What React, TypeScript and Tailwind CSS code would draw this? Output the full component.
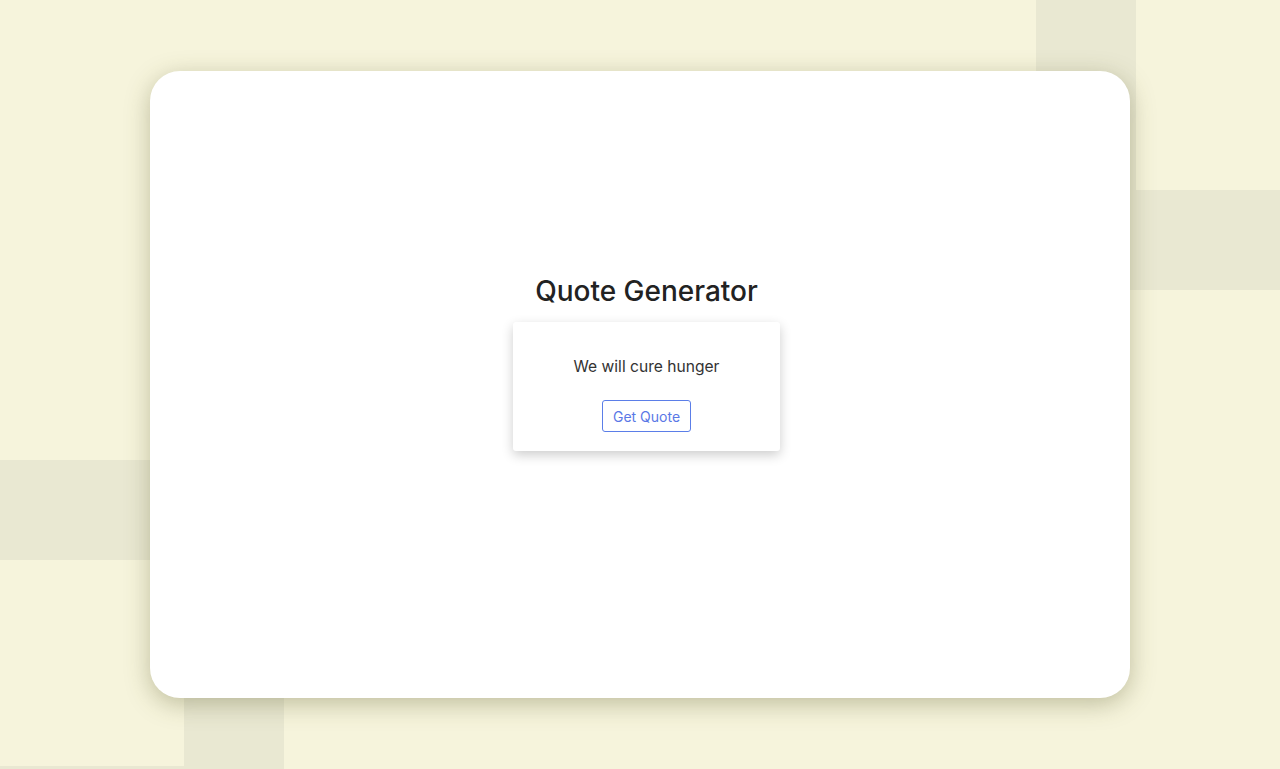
import React, { useState } from 'react';

const quotes = [
  'We will cure hunger',
  'Stay hungry, stay foolish',
  'Do one thing every day that scares you',
];

const App: React.FC = () => {
  const [quote, setQuote] = useState(quotes[0]);

  const nextQuote = () => {
    const idx = Math.floor(Math.random() * quotes.length);
    setQuote(quotes[idx]);
  };

  return (
    <div className="flex h-[769px] w-full items-center justify-center overflow-hidden font-['Inter',sans-serif] [background:linear-gradient(#e9e8d2,#e9e8d2)_1036px_0/100px_190px_no-repeat,linear-gradient(#e9e8d2,#e9e8d2)_1036px_190px/244px_100px_no-repeat,linear-gradient(#e9e8d2,#e9e8d2)_0_460px/300px_100px_no-repeat,linear-gradient(#e9e8d2,#e9e8d2)_184px_600px/100px_169px_no-repeat,linear-gradient(#e9e8d2,#e9e8d2)_0_766px/284px_10px_no-repeat,#f6f4dc]">
      <div className="flex h-[627px] w-[980px] flex-col items-center justify-center rounded-[30px] bg-white pb-[48px] pl-[13px] pt-[4px] shadow-[0_6px_24px_rgba(90,90,40,0.35)]">
        <h1 className="text-[28px] font-medium leading-[34px] text-[#222]">Quote Generator</h1>
        <div className="mt-[14px] flex w-[267px] flex-col items-center rounded-[3px] bg-white pb-[19px] pt-[34px] shadow-[0_4px_12px_rgba(0,0,0,0.2)]">
          <p className="text-[15.6px] leading-[22px] text-[#333]">{quote}</p>
          <button
            onClick={nextQuote}
            className="mt-[22px] h-[32px] rounded-[3px] border border-[#5b7ee8] px-[10px] text-[14px] text-[#5a78e6]"
          >
            Get Quote
          </button>
        </div>
      </div>
    </div>
  );
};

export default App;
